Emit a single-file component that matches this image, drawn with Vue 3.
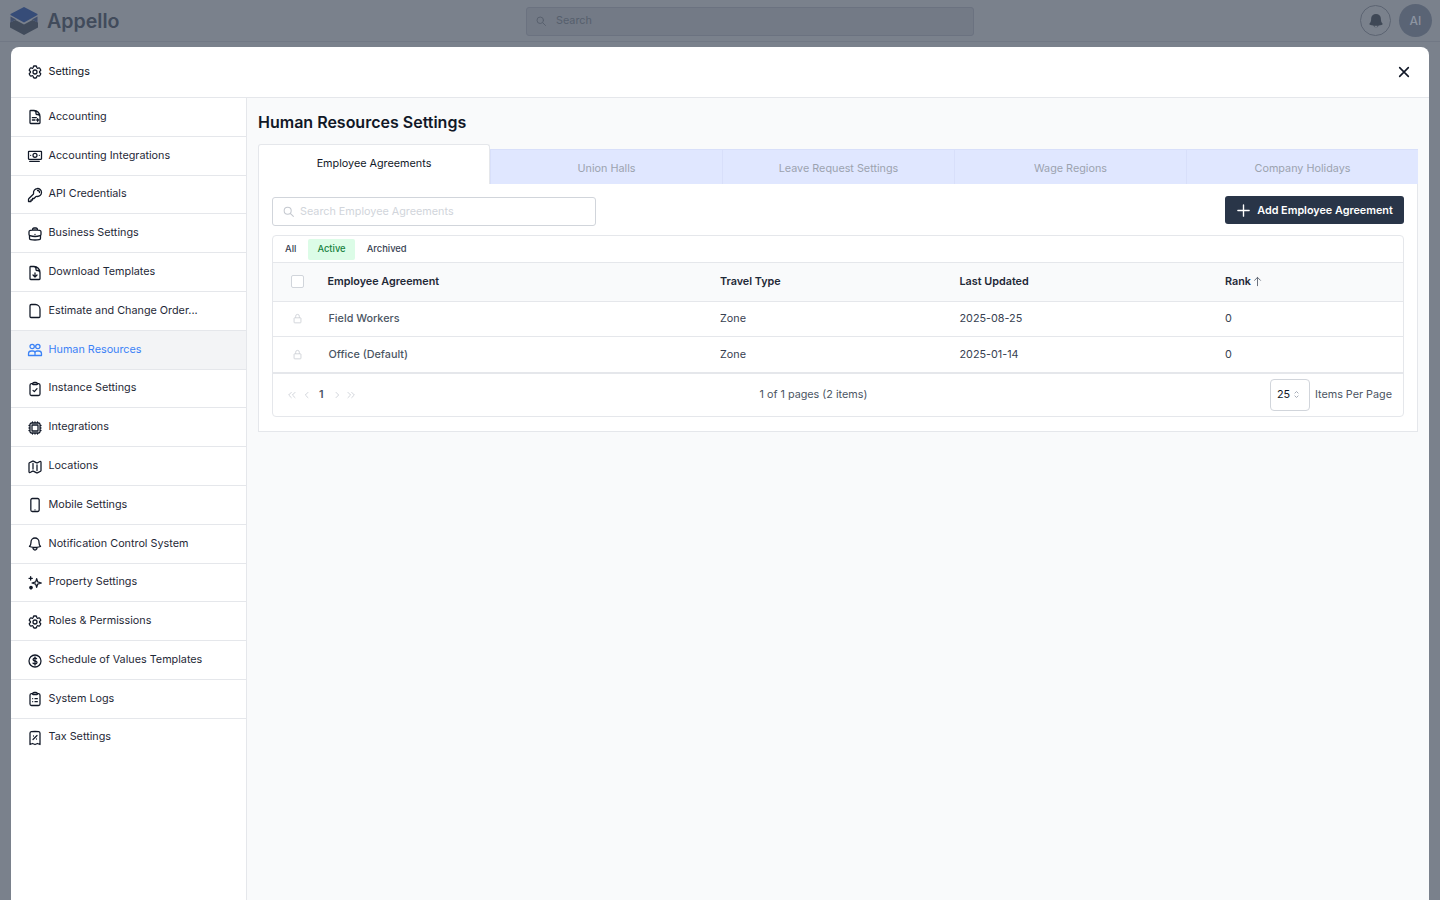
<script setup>
const doc = 'M19.5 14.25v-2.625a3.375 3.375 0 0 0-3.375-3.375h-1.5A1.125 1.125 0 0 1 13.5 7.125v-1.5a3.375 3.375 0 0 0-3.375-3.375H8.25'
const docBody = 'M10.5 2.25H5.625c-.621 0-1.125.504-1.125 1.125v17.25c0 .621.504 1.125 1.125 1.125h12.75c.621 0 1.125-.504 1.125-1.125V11.25a9 9 0 0 0-9-9Z'
const clip = 'M15.666 3.888A2.25 2.25 0 0 0 13.5 2.25h-3c-1.03 0-1.9.693-2.166 1.638m7.332 0c.055.194.084.4.084.612a.75.75 0 0 1-.75.75H9a.75.75 0 0 1-.75-.75c0-.212.03-.418.084-.612m7.332 0c.646.049 1.288.11 1.927.184 1.1.128 1.907 1.077 1.907 2.185V19.5a2.25 2.25 0 0 1-2.25 2.25H6.75A2.25 2.25 0 0 1 4.5 19.5V6.257c0-1.108.806-2.057 1.907-2.185a48.208 48.208 0 0 1 1.927-.184'
const cog = 'M9.594 3.94c.09-.542.56-.94 1.11-.94h2.593c.55 0 1.02.398 1.11.94l.213 1.281c.063.374.313.686.645.87.074.04.147.083.22.127.325.196.72.257 1.075.124l1.217-.456a1.125 1.125 0 0 1 1.37.49l1.296 2.247a1.125 1.125 0 0 1-.26 1.431l-1.003.827c-.293.241-.438.613-.43.992a7.723 7.723 0 0 1 0 .255c-.008.378.137.75.43.991l1.004.827c.424.35.534.955.26 1.43l-1.298 2.247a1.125 1.125 0 0 1-1.369.491l-1.217-.456c-.355-.133-.75-.072-1.076.124a6.47 6.47 0 0 1-.22.128c-.331.183-.581.495-.644.869l-.213 1.281c-.09.543-.56.94-1.11.94h-2.594c-.55 0-1.019-.398-1.11-.94l-.213-1.281c-.062-.374-.312-.686-.644-.87a6.52 6.52 0 0 1-.22-.127c-.325-.196-.72-.257-1.076-.124l-1.217.456a1.125 1.125 0 0 1-1.369-.49l-1.297-2.247a1.125 1.125 0 0 1 .26-1.431l1.004-.827c.292-.24.437-.613.43-.991a6.932 6.932 0 0 1 0-.255c.007-.38-.138-.751-.43-.992l-1.004-.827a1.125 1.125 0 0 1-.26-1.43l1.297-2.247a1.125 1.125 0 0 1 1.37-.491l1.216.456c.356.133.751.072 1.076-.124.072-.044.146-.086.22-.128.332-.183.582-.495.644-.869l.214-1.28ZM15 12a3 3 0 1 1-6 0 3 3 0 0 1 6 0Z'
const bell = 'M14.857 17.082a23.848 23.848 0 0 0 5.454-1.31A8.967 8.967 0 0 1 18 9.75V9A6 6 0 0 0 6 9v.75a8.967 8.967 0 0 1-2.312 6.022c1.733.64 3.56 1.085 5.455 1.31m5.714 0a24.255 24.255 0 0 1-5.714 0m5.714 0a3 3 0 1 1-5.714 0'
const search = 'm21 21-5.2-5.2M17 10.5a6.5 6.5 0 1 1-13 0 6.5 6.5 0 0 1 13 0Z'

const items = [
  { label: 'Accounting', d: doc + ' ' + docBody + ' M8 13h6M8 16.5h4M16 14.5v4M14.5 16.5h3' },
  { label: 'Accounting Integrations', d: 'M3 5h18a.75.75 0 0 1 .75.75v10.5a.75.75 0 0 1-.75.75H3a.75.75 0 0 1-.75-.75V5.75A.75.75 0 0 1 3 5ZM15 11a3 3 0 1 1-6 0 3 3 0 0 1 6 0ZM5.5 11h.01M18.5 11h.01M4 20h14.5' },
  { label: 'API Credentials', d: 'M15.75 5.25a3 3 0 0 1 3 3m3 0a6 6 0 0 1-7.029 5.912c-.563-.097-1.159.026-1.563.43L10.5 17.25H8.25v2.25H6v2.25H2.25v-2.818c0-.597.237-1.17.659-1.591l6.499-6.499c.404-.404.527-1 .43-1.563A6 6 0 1 1 21.75 8.25Z' },
  { label: 'Business Settings', d: 'M20.25 14.15v4.25c0 1.094-.787 2.036-1.872 2.18-2.087.277-4.216.42-6.378.42s-4.291-.143-6.378-.42c-1.085-.144-1.872-1.086-1.872-2.18v-4.25m16.5 0a2.18 2.18 0 0 0 .75-1.661V8.706c0-1.081-.768-2.015-1.837-2.175a48.114 48.114 0 0 0-3.413-.387m4.5 8.006c-.194.165-.42.295-.673.38A23.978 23.978 0 0 1 12 15.75c-2.648 0-5.195-.429-7.577-1.22a2.016 2.016 0 0 1-.673-.38m0 0A2.18 2.18 0 0 1 3 12.489V8.706c0-1.081.768-2.015 1.837-2.175a48.111 48.111 0 0 1 3.413-.387m7.5 0V5.25A2.25 2.25 0 0 0 13.5 3h-3a2.25 2.25 0 0 0-2.25 2.25v.894m7.5 0a48.667 48.667 0 0 0-7.5 0M12 12.75h.008v.008H12v-.008Z' },
  { label: 'Download Templates', d: doc + ' ' + docBody + ' M9 15l3 3 3-3M12 18v-6' },
  { label: 'Estimate and Change Order...', d: 'M6.5 2.25h6a7 7 0 0 1 7 7v11a1.5 1.5 0 0 1-1.5 1.5H6a1.5 1.5 0 0 1-1.5-1.5V4.25a2 2 0 0 1 2-2Z' },
  { label: 'Human Resources', active: true, d: 'M11 6.75a3.25 3.25 0 1 1-6.5 0 3.25 3.25 0 0 1 6.5 0ZM19.5 6.75a3.25 3.25 0 1 1-6.5 0 3.25 3.25 0 0 1 6.5 0ZM2.25 20.25v-2.5A4.25 4.25 0 0 1 6.5 13.5H9a3 3 0 0 1 3 3v3.75H2.25ZM12 20.25h9.75v-2.5a4.25 4.25 0 0 0-4.25-4.25H15a3 3 0 0 0-3 3' },
  { label: 'Instance Settings', d: clip + ' M9 14l2 2 4-4.5' },
  { label: 'Integrations', d: 'M8.25 3v1.5M4.5 8.25H3m18 0h-1.5M4.5 12H3m18 0h-1.5m-15 3.75H3m18 0h-1.5M8.25 19.5V21M12 3v1.5m0 15V21m3.75-18v1.5m0 15V21m-9-1.5h10.5a2.25 2.25 0 0 0 2.25-2.25V6.75a2.25 2.25 0 0 0-2.25-2.25H6.75A2.25 2.25 0 0 0 4.5 6.75v10.5a2.25 2.25 0 0 0 2.25 2.25Zm.75-12h9v9h-9v-9Z' },
  { label: 'Locations', d: 'M9 6.75V15m6-6v8.25m.503 3.498 4.875-2.437c.381-.19.622-.58.622-1.006V4.82c0-.836-.88-1.38-1.628-1.006l-3.869 1.934c-.317.159-.69.159-1.006 0L9.503 3.252a1.125 1.125 0 0 0-1.006 0L3.622 5.689C3.24 5.88 3 6.27 3 6.695V19.18c0 .836.88 1.38 1.628 1.006l3.869-1.934c.317-.159.69-.159 1.006 0l4.994 2.497c.317.158.69.158 1.006 0Z' },
  { label: 'Mobile Settings', d: 'M8 2.25h8A2.25 2.25 0 0 1 18.25 4.5v15A2.25 2.25 0 0 1 16 21.75H8a2.25 2.25 0 0 1-2.25-2.25v-15A2.25 2.25 0 0 1 8 2.25ZM12 19.25h.01' },
  { label: 'Notification Control System', d: bell },
  { label: 'Property Settings', d: 'M14.5 5.5l1.5 4.8 5.5 1.7-5.5 1.7-1.5 4.8-1.5-4.8-5.5-1.7 5.5-1.7ZM5.5 2.5v5M3 5h5M6 17a1.75 1.75 0 1 0 .01 0ZM6 17.5v3.5M4 19.25h4' },
  { label: 'Roles & Permissions', d: cog },
  { label: 'Schedule of Values Templates', d: 'M12 6v12m-3-2.818.879.659c1.171.879 3.07.879 4.242 0 1.172-.879 1.172-2.303 0-3.182C13.536 12.219 12.768 12 12 12c-.725 0-1.45-.22-2.003-.659-1.106-.879-1.106-2.303 0-3.182s2.9-.879 4.006 0l.415.33M21 12a9 9 0 1 1-18 0 9 9 0 0 1 18 0Z' },
  { label: 'System Logs', d: clip + ' M8.5 11.5h.01M12 11.5h3.5M8.5 16h.01M12 16h3.5' },
  { label: 'Tax Settings', d: 'M9 14.25l6-6m4.5-3.493V21.75l-3.75-1.5-3.75 1.5-3.75-1.5-3.75 1.5V4.757c0-1.108.806-2.057 1.907-2.185a48.507 48.507 0 0 1 11.186 0c1.1.128 1.907 1.077 1.907 2.185ZM9.75 9h.008v.008H9.75V9ZM14.25 13.5h.008v.008h-.008V13.5Z' }
]
const tabs = ['Employee Agreements', 'Union Halls', 'Leave Request Settings', 'Wage Regions', 'Company Holidays']
const rows = [
  { name: 'Field Workers', travel: 'Zone', updated: '2025-08-25', rank: 0 },
  { name: 'Office (Default)', travel: 'Zone', updated: '2025-01-14', rank: 0 }
]
</script>

<template>
  <div class="page">
    <header class="topbar">
      <div class="brand">
        <svg class="logo" viewBox="0 0 28 28" width="28" height="28">
          <path d="M0 15.5 5.5 13 14 17.5 22.5 13 28 15.5v5L14 28 0 20.5Z" fill="#414b5b" />
          <path d="M14 0 27.5 7v1L14 15.5.5 8V7Z" fill="#364c78" />
          <path d="M.5 9.5 6 12.5.5 15.5ZM27.5 9.5 22 12.5l5.5 3Z" fill="#414f6c" />
        </svg>
        <span class="brand-name">Appello</span>
      </div>
      <div class="top-search">
        <svg viewBox="0 0 24 24" width="12" height="12" class="ico"><path :d="search" /></svg>
        <span>Search</span>
      </div>
      <div class="top-actions">
        <div class="bell-btn">
          <svg viewBox="0 0 24 24" width="18" height="18"><path fill="#3f4856" d="M12 2.5a6.5 6.5 0 0 0-6.5 6.5v1c0 2-.8 3.9-2.1 5.4-.4.5-.2 1.3.5 1.5 1.5.5 3 .9 4.6 1.1a3.6 3.6 0 0 0 7 0c1.6-.2 3.1-.6 4.6-1.1.7-.2.9-1 .5-1.5A8.2 8.2 0 0 1 18.5 10V9A6.5 6.5 0 0 0 12 2.5Zm-2.2 15.8a20 20 0 0 0 4.4 0 2.2 2.2 0 0 1-4.4 0Z" /></svg>
        </div>
        <div class="avatar">AI</div>
      </div>
    </header>

    <section class="modal">
      <div class="modal-head">
        <div class="modal-title">
          <svg viewBox="0 0 24 24" width="16" height="16" class="ico"><path :d="cog" /></svg>
          <span>Settings</span>
        </div>
        <svg class="close" viewBox="0 0 24 24" width="16" height="16"><path d="M5.5 5.5l13 13M18.5 5.5l-13 13" /></svg>
      </div>
      <div class="modal-body">
        <nav class="side">
          <a v-for="item in items" :key="item.label" class="side-item" :class="{ active: item.active }">
            <svg viewBox="0 0 24 24" width="16" height="16" class="ico"><path :d="item.d" /></svg>
            <span>{{ item.label }}</span>
          </a>
        </nav>
        <main class="content">
          <h1>Human Resources Settings</h1>
          <div class="tabs">
            <div v-for="(t, i) in tabs" :key="t" class="tab" :class="{ on: i === 0 }">{{ t }}</div>
          </div>
          <div class="panel">
            <div class="toolbar">
              <div class="search">
                <svg viewBox="0 0 24 24" width="13" height="13" class="ico"><path :d="search" /></svg>
                <span>Search Employee Agreements</span>
              </div>
              <button class="add">
                <svg viewBox="0 0 24 24" width="15" height="15"><path d="M12 3v18M3 12h18" /></svg>
                <span>Add Employee Agreement</span>
              </button>
            </div>
            <div class="table">
              <div class="filters">
                <span class="filter">All</span>
                <span class="filter green">Active</span>
                <span class="filter">Archived</span>
              </div>
              <div class="grid-row head">
                <div class="cell-first"><span class="check"></span></div>
                <div>Employee Agreement</div>
                <div>Travel Type</div>
                <div>Last Updated</div>
                <div class="rank">Rank
                  <svg viewBox="0 0 24 24" width="11" height="11"><path d="M12 22V3M5 10l7-7 7 7" /></svg>
                </div>
              </div>
              <div v-for="(r, i) in rows" :key="r.name" class="grid-row body" :class="{ tall: i === rows.length - 1 }">
                <div class="cell-first">
                  <svg viewBox="0 0 24 24" width="11" height="11" class="lock"><path d="M8 10.5V7a4 4 0 0 1 8 0v3.5M5.5 10.5h13a1 1 0 0 1 1 1V20a1.5 1.5 0 0 1-1.5 1.5H6A1.5 1.5 0 0 1 4.5 20v-8.5a1 1 0 0 1 1-1Z" /></svg>
                </div>
                <div class="name">{{ r.name }}</div>
                <div>{{ r.travel }}</div>
                <div>{{ r.updated }}</div>
                <div>{{ r.rank }}</div>
              </div>
              <div class="pager">
                <div class="pages">
                  <svg viewBox="0 0 24 24" width="10" height="10"><path d="M11 5l-7 7 7 7M20 5l-7 7 7 7" /></svg>
                  <svg class="p2" viewBox="0 0 24 24" width="10" height="10"><path d="M15 5l-7 7 7 7" /></svg>
                  <b>1</b>
                  <svg class="p3" viewBox="0 0 24 24" width="10" height="10"><path d="M9 5l7 7-7 7" /></svg>
                  <svg class="p2" viewBox="0 0 24 24" width="10" height="10"><path d="M4 5l7 7-7 7M13 5l7 7-7 7" /></svg>
                </div>
                <div class="summary">1 of 1 pages (2 items)</div>
                <div class="per">
                  <div class="select"><span>25</span>
                    <svg viewBox="0 0 24 24" width="9" height="11"><path d="M7 9l5-5 5 5M7 15l5 5 5-5" /></svg>
                  </div>
                  <span class="per-label">Items Per Page</span>
                </div>
              </div>
            </div>
          </div>
        </main>
      </div>
    </section>
  </div>
</template>

<style scoped>
.page {
  height: 900px;
  overflow: hidden;
  display: flex;
  flex-direction: column;
  background: #7a818c;
  font-family: Inter, "Liberation Sans", sans-serif;
  font-size: 10.8px;
  color: #111827;
}
.ico { fill: none; stroke: currentColor; stroke-width: 1.9; stroke-linecap: round; stroke-linejoin: round; flex: none; }
.topbar {
  height: 42px;
  flex: none;
  display: grid;
  grid-template-columns: 526px 448px 1fr;
  align-items: center;
  border-bottom: 1px solid #717885;
  box-sizing: border-box;
}
.brand { display: flex; align-items: center; gap: 9px; padding-left: 10px; }
.brand-name { font-size: 19.6px; font-weight: 600; color: #414b5b; }
.top-search {
  height: 29px;
  box-sizing: border-box;
  margin-top: 1px;
  border: 1px solid #6b7280;
  border-radius: 3px;
  background: #737a86;
  display: flex;
  align-items: center;
  gap: 9px;
  padding: 0 0 1px 8px;
  color: #565f6d;
}
.top-actions { display: flex; justify-content: flex-end; align-items: center; gap: 8px; padding-right: 8px; }
.bell-btn {
  width: 31px; height: 31px; box-sizing: border-box;
  border: 1px solid #5c6472; border-radius: 50%;
  display: flex; align-items: center; justify-content: center;
}
.avatar {
  width: 33px; height: 33px; border-radius: 50%;
  background: #5a6475; color: #8d95a2;
  display: flex; align-items: center; justify-content: center;
  font-size: 12px; font-weight: 500;
}
.modal {
  flex: 1;
  margin: 5px 11px 0;
  background: #fff;
  border-radius: 8px 8px 0 0;
  display: flex;
  flex-direction: column;
  min-height: 0;
}
.modal-head {
  height: 51px;
  box-sizing: border-box;
  flex: none;
  border-bottom: 1px solid #e5e7eb;
  display: flex;
  align-items: center;
  justify-content: space-between;
  padding: 0 17px 2px 16px;
}
.modal-title { display: flex; align-items: center; gap: 5.5px; }
.modal-title .ico, .side-item .ico, .close { margin-top: 2px; }
.close { fill: none; stroke: #111827; stroke-width: 2.4; stroke-linecap: round; }
.modal-body { flex: 1; display: flex; min-height: 0; }
.side {
  width: 236px;
  flex: none;
  box-sizing: border-box;
  border-right: 1px solid #e5e7eb;
  background: #fff;
}
.side-item {
  height: 38.8px;
  box-sizing: border-box;
  padding: 0 0 1px 16px;
  display: flex;
  align-items: center;
  gap: 5.5px;
  border-bottom: 1px solid #e5e7eb;
  color: #1f2937;
}
.side-item .ico { color: #111827; }
.side-item:last-child { border-bottom: none; padding-bottom: 3px; }
.side-item.active { background: #f3f4f6; color: #3b82f6; }
.side-item.active .ico { color: #3b82f6; }
.content { flex: 1; background: #f9fafb; padding: 0 11px; min-width: 0; }
h1 { margin: 14px 0 12px; font-size: 16px; line-height: 20px; font-weight: 600; color: #111827; }
.tabs { display: grid; grid-template-columns: repeat(5, 1fr); height: 40px; align-items: end; }
.tab {
  height: 35px;
  box-sizing: border-box;
  background: #e0e7ff;
  border-left: 1px solid #d8dffa;
  border-top: 1px solid #d8dffa;
  color: #9ca3af;
  display: flex;
  align-items: center;
  justify-content: center;
  padding-top: 3px;
}
.tab.on {
  height: 40px;
  background: #fff;
  color: #111827;
  border: 1px solid #e5e7eb;
  border-bottom: none;
  border-radius: 3px 3px 0 0;
  padding: 0 0 3px;
}
.panel {
  background: #fff;
  border: 1px solid #e5e7eb;
  border-top: none;
  padding: 12px 13px 14px;
}
.toolbar { display: flex; justify-content: space-between; align-items: flex-start; margin-bottom: 9px; }
.search {
  width: 324px;
  height: 29px;
  margin-top: 1px;
  box-sizing: border-box;
  border: 1px solid #d1d5db;
  border-radius: 3px;
  display: flex;
  align-items: center;
  gap: 5px;
  padding: 0 0 1px 9px;
  color: #d1d5db;
}
.search .ico { color: #c4c8cf; }
.add {
  width: 179px;
  height: 28px;
  border: none;
  border-radius: 3px;
  background: #293548;
  color: #fff;
  display: flex;
  align-items: center;
  justify-content: center;
  gap: 6px;
  font: 600 10.8px Inter, "Liberation Sans", sans-serif;
  padding: 0;
}
.add svg { fill: none; stroke: #fff; stroke-width: 2.2; stroke-linecap: round; }
.table { border: 1px solid #e5e7eb; border-radius: 4px; }
.filters {
  height: 27px;
  box-sizing: border-box;
  display: flex;
  align-items: center;
  gap: 4px;
  padding-left: 3px;
  border-bottom: 1px solid #e5e7eb;
  font-size: 9.4px;
  color: #374151;
}
.filter { height: 21px; box-sizing: border-box; padding: 0 9px 2px; display: flex; align-items: center; border-radius: 2px; font-weight: 500; margin-top: 1px; }
.filter.green { background: #dcfce7; color: #15803d; }
.filter:first-child { padding-right: 8px; }
.filter:last-child { padding-left: 8px; }
.grid-row {
  display: grid;
  grid-template-columns: 54.5px 392.5px 239.5px 265.5px 1fr;
  align-items: center;
  box-sizing: border-box;
  border-bottom: 1px solid #e5e7eb;
  color: #374151;
}
.grid-row.head { height: 39px; background: #f9fafb; font-weight: 600; color: #1f2937; padding-bottom: 2px; }
.grid-row.body { height: 35px; padding-bottom: 2px; }
.grid-row.body.tall { height: 36px; padding-bottom: 1px; }
.grid-row.body .name { font-weight: 500; padding-left: 1px; color: #4b5563; }
.cell-first { display: flex; padding-left: 18px; }
.grid-row.body .cell-first { padding-left: 19px; }
.check { width: 13px; height: 13px; box-sizing: border-box; border: 1px solid #d1d5db; border-radius: 2px; background: #fff; }
.lock { fill: none; stroke: #c4c8cf; stroke-width: 1.6; }
.rank { display: flex; align-items: center; gap: 1px; }
.rank svg { fill: none; stroke: #374151; stroke-width: 1.6; }
.pager {
  height: 43px;
  box-sizing: border-box;
  border-top: 1px solid #e5e7eb;
  display: flex;
  justify-content: space-between;
  align-items: center;
  padding: 0 11px 0 14px;
  color: #4b5563;
}
.summary { padding-bottom: 2px; }
.pages { display: flex; align-items: center; width: 70px; }
.pages svg { fill: none; stroke: #c9cdd4; stroke-width: 2; flex: none; }
.pages .p2 { margin-left: 4.5px; }
.pages .p3 { margin-left: 8.5px; }
.pages b { font-weight: 600; margin: 0 0 2px 7.5px; color: #4b5563; width: 4px; }
.per { display: flex; justify-content: flex-end; align-items: center; gap: 5px; }
.per-label { padding-bottom: 2px; }
.select {
  width: 40px; height: 32px; box-sizing: border-box;
  border: 1px solid #d1d5db; border-radius: 4px;
  display: flex; align-items: center; gap: 2px; padding: 0 0 1px 6px;
  color: #111827;
}
.select svg { fill: none; stroke: #9ca3af; stroke-width: 2.4; flex: none; }
</style>
